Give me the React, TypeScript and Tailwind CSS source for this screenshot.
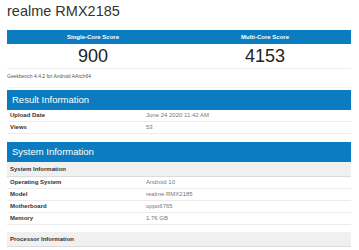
const font = "font-['Liberation_Sans',Arial,sans-serif]";

interface IRow {
    label: string,
    value: string
}

const Row = ({label, value}: IRow) => {
    return (
        <div className="flex h-[12px] items-center border-b border-[#ececec] text-[6px]">
            <div className="w-[139px] pl-[3px] font-bold text-[#333]">{label}</div>
            <div className="text-[#777]">{value}</div>
        </div>
    )
}

const Bar = ({title}: {title: string}) => {
    return (
        <div className="flex h-[20px] items-center bg-[#0c7cc0] pl-[5px] text-[9.5px] text-white">
            {title}
        </div>
    )
}

const GrayRow = ({title}: {title: string}) => {
    return (
        <div className="flex h-[15px] items-center border-b border-[#dcdcdc] bg-[#f0f0f0] pl-[3px] text-[6px] font-bold text-[#333]">
            {title}
        </div>
    )
}

export default function App() {
    return (
        <div className={`${font} h-[250px] w-[359px] overflow-hidden bg-white px-[7px]`}>
            <h1 className="pt-[2px] text-[14.5px] leading-[18px] text-[#333]">realme RMX2185</h1>

            <div className="mt-[10px] w-[344px]">
                <div className="grid grid-cols-2">
                    <div className="flex h-[14px] items-center justify-center bg-[#0c7cc0] text-[6px] font-bold text-white">Single-Core Score</div>
                    <div className="flex h-[14px] items-center justify-center bg-[#0c7cc0] text-[6px] font-bold text-white">Multi-Core Score</div>
                    <div className="flex h-[24px] items-center justify-center pt-[1px] text-[18px] text-[#222]">900</div>
                    <div className="flex h-[24px] items-center justify-center pt-[1px] text-[18px] text-[#222]">4153</div>
                </div>
                <div className="flex h-[16px] items-center border-t border-[#f0f0f0] text-[5px] text-[#555]">
                    Geekbench 4.4.2 for Android AArch64
                </div>
                <div className="h-[4px] border-b border-[#eef4f8]" />
            </div>

            <div className="mt-[2px] w-[344px]">
                <Bar title="Result Information" />
                <Row label="Upload Date" value="June 24 2020 11:42 AM" />
                <Row label="Views" value="53" />
            </div>

            <div className="mt-[8px] w-[344px]">
                <Bar title="System Information" />
                <GrayRow title="System Information" />
                <Row label="Operating System" value="Android 10" />
                <Row label="Model" value="realme RMX2185" />
                <Row label="Motherboard" value="oppo6765" />
                <Row label="Memory" value="1.76 GB" />
                <div className="mt-[7px]">
                    <GrayRow title="Processor Information" />
                </div>
            </div>
        </div>
    )
}
